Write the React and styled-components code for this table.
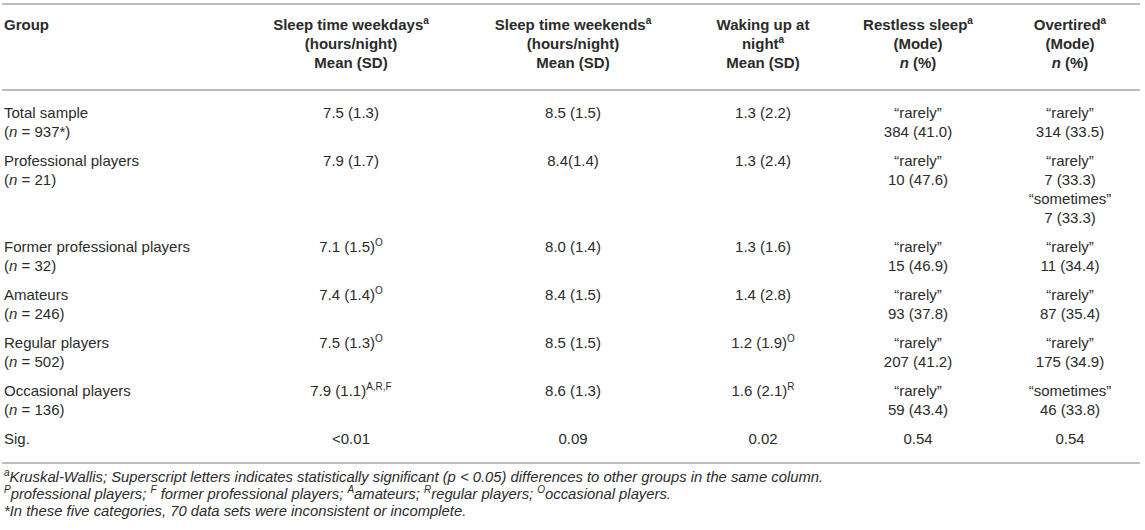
import React from 'react';
import styled, { createGlobalStyle } from 'styled-components';

const GlobalStyle = createGlobalStyle`
  body {
    margin: 0;
    background: #ffffff;
    color: #2b2b2b;
    font-family: 'Liberation Sans', Arial, Helvetica, sans-serif;
  }
`

const Page = styled.div`
  padding: 3px 0 0 2px;
  width: 1138px;
`

const Table = styled.table`
  width: 1138px;
  border-collapse: collapse;
  table-layout: fixed;
  font-size: 15px;
  line-height: 19px;
`

const HeadCell = styled.th`
  border-top: 2px solid #bdbdbd;
  border-bottom: 2px solid #bdbdbd;
  padding: 10px 4px 17px;
  font-weight: bold;
  vertical-align: top;
  text-align: ${p => (p.$left ? 'left' : 'center')};
  padding-left: ${p => (p.$left ? '2px' : '4px')};
`

const Row = styled.tr`
  &:first-child td {
    padding-top: 12px;
  }

  &:last-child td {
    padding-bottom: 14px;
    border-bottom: 2px solid #bdbdbd;
  }
`

const Cell = styled.td`
  padding: 5px 4px;
  vertical-align: top;
  text-align: ${p => (p.$left ? 'left' : 'center')};
  padding-left: ${p => (p.$left ? '2px' : '4px')};
`

const Sup = styled.sup`
  font-size: 10px;
  line-height: 0;
  vertical-align: 6px;
  font-weight: ${p => (p.$light ? 'normal' : 'inherit')};
`

const Notes = styled.div`
  padding: 5px 0 0 2px;
  font-style: italic;
  font-size: 14.8px;
  line-height: 17px;
`

const Note = styled.div`
  white-space: nowrap;
`

const widths = [244, 210, 234, 146, 164, 140];

const rows = [
  {
    group: 'Total sample',
    n: '937*',
    wd: ['7.5 (1.3)'],
    we: '8.5 (1.5)',
    wake: ['1.3 (2.2)'],
    restless: ['“rarely”', '384 (41.0)'],
    over: ['“rarely”', '314 (33.5)'],
  },
  {
    group: 'Professional players',
    n: '21',
    wd: ['7.9 (1.7)'],
    we: '8.4(1.4)',
    wake: ['1.3 (2.4)'],
    restless: ['“rarely”', '10 (47.6)'],
    over: ['“rarely”', '7 (33.3)', '“sometimes”', '7 (33.3)'],
  },
  {
    group: 'Former professional players',
    n: '32',
    wd: ['7.1 (1.5)', 'O'],
    we: '8.0 (1.4)',
    wake: ['1.3 (1.6)'],
    restless: ['“rarely”', '15 (46.9)'],
    over: ['“rarely”', '11 (34.4)'],
  },
  {
    group: 'Amateurs',
    n: '246',
    wd: ['7.4 (1.4)', 'O'],
    we: '8.4 (1.5)',
    wake: ['1.4 (2.8)'],
    restless: ['“rarely”', '93 (37.8)'],
    over: ['“rarely”', '87 (35.4)'],
  },
  {
    group: 'Regular players',
    n: '502',
    wd: ['7.5 (1.3)', 'O'],
    we: '8.5 (1.5)',
    wake: ['1.2 (1.9)', 'O'],
    restless: ['“rarely”', '207 (41.2)'],
    over: ['“rarely”', '175 (34.9)'],
  },
  {
    group: 'Occasional players',
    n: '136',
    wd: ['7.9 (1.1)', 'A,R,F'],
    we: '8.6 (1.3)',
    wake: ['1.6 (2.1)', 'R'],
    restless: ['“rarely”', '59 (43.4)'],
    over: ['“sometimes”', '46 (33.8)'],
  },
];

function Value({ v }) {
  return (
    <>
      {v[0]}
      {v[1] && <Sup>{v[1]}</Sup>}
    </>
  );
}

function Lines({ items }) {
  return items.map((t, i) => (
    <React.Fragment key={i}>
      {i > 0 && <br />}
      {t}
    </React.Fragment>
  ));
}

export default function App() {
  return (
    <Page>
      <GlobalStyle />
      <Table>
        <colgroup>
          {widths.map((w, i) => <col key={i} style={{ width: w }} />)}
        </colgroup>
        <thead>
          <tr>
            <HeadCell $left>Group</HeadCell>
            <HeadCell>
              Sleep time weekdays<Sup>a</Sup><br />(hours/night)<br />Mean (SD)
            </HeadCell>
            <HeadCell>
              Sleep time weekends<Sup>a</Sup><br />(hours/night)<br />Mean (SD)
            </HeadCell>
            <HeadCell>
              Waking up at<br />night<Sup>a</Sup><br />Mean (SD)
            </HeadCell>
            <HeadCell>
              Restless sleep<Sup>a</Sup><br />(Mode)<br /><i>n</i> (%)
            </HeadCell>
            <HeadCell>
              Overtired<Sup>a</Sup><br />(Mode)<br /><i>n</i> (%)
            </HeadCell>
          </tr>
        </thead>
        <tbody>
          {rows.map(r => (
            <Row key={r.group}>
              <Cell $left>
                {r.group}<br />(<i>n</i> = {r.n})
              </Cell>
              <Cell><Value v={r.wd} /></Cell>
              <Cell>{r.we}</Cell>
              <Cell><Value v={r.wake} /></Cell>
              <Cell><Lines items={r.restless} /></Cell>
              <Cell><Lines items={r.over} /></Cell>
            </Row>
          ))}
          <Row>
            <Cell $left>Sig.</Cell>
            <Cell>&lt;0.01</Cell>
            <Cell>0.09</Cell>
            <Cell>0.02</Cell>
            <Cell>0.54</Cell>
            <Cell>0.54</Cell>
          </Row>
        </tbody>
      </Table>
      <Notes>
        <Note>
          <Sup $light>a</Sup>Kruskal-Wallis; Superscript letters indicates statistically significant (p &lt; 0.05) differences to other groups in the same column.
        </Note>
        <Note>
          <Sup $light>P</Sup>professional players; <Sup $light>F</Sup> former professional players; <Sup $light>A</Sup>amateurs; <Sup $light>R</Sup>regular players; <Sup $light>O</Sup>occasional players.
        </Note>
        <Note>*In these five categories, 70 data sets were inconsistent or incomplete.</Note>
      </Notes>
    </Page>
  );
}
